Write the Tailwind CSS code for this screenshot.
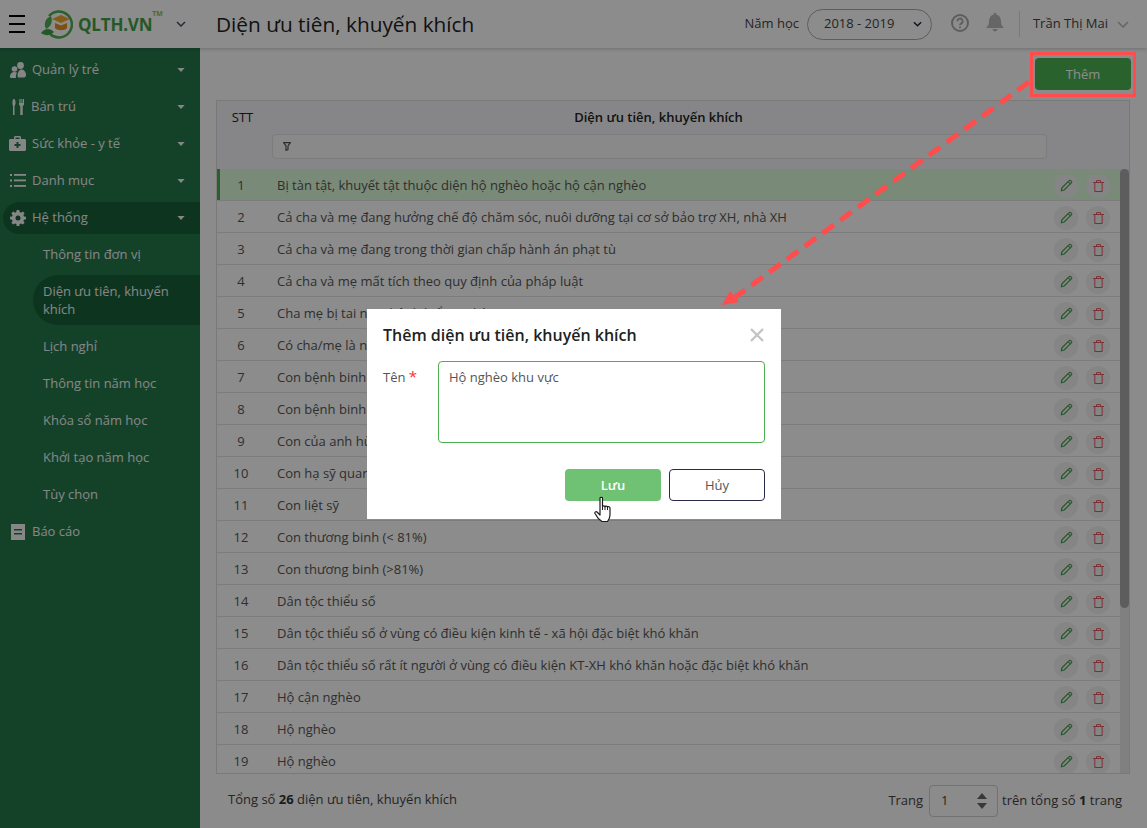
<!DOCTYPE html>
<html lang="vi">
<head>
<meta charset="UTF-8">
<title>Diện ưu tiên, khuyến khích</title>
<script src="https://cdn.jsdelivr.net/npm/@tailwindcss/browser@4"></script>
</head>
<body class="relative w-[1147px] h-[828px] overflow-hidden bg-white font-['Open_Sans',sans-serif] text-[13px] text-[#333]">

<!-- header -->
<header class="relative z-10 flex items-center h-12 bg-white shadow-[0_1px_4px_rgba(0,0,0,0.2)]">
  <div class="flex flex-col gap-[6px] ml-[9px] w-4">
    <span class="h-[2px] bg-black"></span><span class="h-[2px] bg-black"></span><span class="h-[2px] bg-black"></span>
  </div>
  <div class="flex items-center ml-[15px] w-[137px] h-8">
    <svg class="w-[34px] h-[30px] shrink-0" viewBox="0 0 34 30">
      <path d="M9 7 A13 13 0 1 1 10 25" fill="none" stroke="#4caf50" stroke-width="2.4"/>
      <path d="M1 24 C5 19 10 19 14 23 C10 27 5 27 1 24Z" fill="#43a047"/>
      <path d="M6 20 C3 14 6 9 11 7 C13 12 11 18 6 20Z" fill="#4caf50"/>
      <path d="M12 10 L21 6 L30 10 L21 14Z" fill="#f0a830"/>
      <path d="M15 14 L21 16.5 L27 14 V19 C25 22 17 22 15 19Z" fill="#e88f20"/>
    </svg>
    <span class="ml-[4px] text-[17px] leading-none font-bold text-[#43a047] tracking-[-0.2px]">QLTH.VN</span>
    <span class="self-start mt-[2px] text-[7px] leading-none font-bold text-[#8bc34a]">TM</span>
  </div>
  <svg class="w-[10px] h-[6px] -ml-px" viewBox="0 0 10 6"><path d="M1 1l4 4 4-4" fill="none" stroke="#44445a" stroke-width="1.4"/></svg>
  <h1 class="ml-[30px] text-[20.8px] leading-none text-[#222]">Diện ưu tiên, khuyến khích</h1>
  <div class="ml-auto flex items-center">
    <span class="text-[#444]">Năm học</span>
    <div class="flex items-center justify-between ml-2 w-[125px] h-[31px] pl-4 pr-[9px] rounded-full border border-[#aaa] text-[#444]">
      <span>2018 - 2019</span>
      <svg class="w-[9px] h-[6px]" viewBox="0 0 10 6"><path d="M1 1l4 4 4-4" fill="none" stroke="#22223a" stroke-width="1.6"/></svg>
    </div>
    <svg class="w-[18px] h-[18px] ml-[19px] -mt-[3px]" viewBox="0 0 18 18" fill="none" stroke="#aaa"><circle cx="9" cy="9" r="8" stroke-width="2"/><path d="M6.4 7.2a2.6 2.6 0 1 1 3.9 2.2c-.9.5-1.3 1-1.3 1.9" stroke-width="1.8"/><path d="M9 12.6v1.7" stroke-width="1.8"/></svg>
    <svg class="w-[18px] h-[19px] ml-[17px] -mt-[3px]" viewBox="0 0 18 19" fill="#bbb"><path d="M9 0a1.5 1.5 0 0 1 1.5 1.7C13.5 2.4 15 5 15 8c0 3.5 1 5 3 7H0c2-2 3-3.500 3-7 0-3 1.500-5.600 4.500-6.300A1.500 1.500 0 0 1 9 0zM6.500 16h5a2.500 2.500 0 0 1-5 0z"/></svg>
    <span class="ml-[15px] w-px h-[26px] bg-[#ddd]"></span>
    <span class="ml-[13px] text-[#444]">Trần Thị Mai</span>
    <svg class="w-3 h-[7px] ml-[9px] mr-[18px]" viewBox="0 0 12 7"><path d="M1 1l5 5 5-5" fill="none" stroke="#bbb" stroke-width="1.6"/></svg>
  </div>
</header>

<div class="flex h-[780px]">
  <!-- sidebar -->
  <nav class="w-[200px] shrink-0 pt-[3px] bg-[#24784c] text-[#f4f4f4]">
    <a class="flex items-center h-[37px] pl-[10px] pr-[15px]">
      <svg class="w-4 h-4 shrink-0" viewBox="0 0 16 16" fill="#f4f4f4"><circle cx="10.500" cy="3.500" r="3.400"/><circle cx="4.500" cy="7" r="2.800"/><path d="M0 15c0-3.500 2-5 4.500-5 1 0 2 .3 2.600.8C6 12 5.800 14 6 16H1a1 1 0 0 1-1-1z"/><path d="M7.500 14c0-4 2-6.500 4-6.500S16 9.500 16 13c0 1.500-1 2.500-2 2.500H9c-1 0-1.500-.5-1.500-1.500z"/></svg>
      <span class="ml-[6px] flex-1">Quản lý trẻ</span>
      <svg class="w-2 h-1" viewBox="0 0 9 5"><path d="M0 0h9L4.500 5z" fill="#f4f4f4"/></svg>
    </a>
    <a class="flex items-center h-[37px] pl-[12px] pr-[15px]">
      <svg class="w-[12px] h-4 shrink-0" viewBox="0 0 12 16" fill="#f4f4f4"><path d="M1.400 0c.8 0 1.600 1 1.600 3.500 0 2-.5 3-1 3.300V16H.500V6.800C0 6.500 0 5 0 3.500 0 1 .6 0 1.400 0z" transform="translate(.5 0)"/><path d="M7 0h.6v4h.6V0h.6v4h.6V0h.6v4h.6V0H12v5c0 1-.6 1.800-1.300 2V16H8.300V7C7.600 6.800 7 6 7 5z"/></svg>
      <span class="ml-[7px] flex-1">Bán trú</span>
      <svg class="w-2 h-1" viewBox="0 0 9 5"><path d="M0 0h9L4.500 5z" fill="#f4f4f4"/></svg>
    </a>
    <a class="flex items-center h-[37px] pl-[9px] pr-[15px]">
      <svg class="w-[17px] h-[15px] shrink-0" viewBox="0 0 17 15"><path fill="#f4f4f4" fill-rule="evenodd" d="M5 3V1.500C5 .6 5.600 0 6.500 0h4c.9 0 1.500.6 1.500 1.500V3h3.500c.8 0 1.500.7 1.500 1.500v9c0 .8-.7 1.500-1.500 1.500h-14C.7 15 0 14.300 0 13.500v-9C0 3.700.7 3 1.500 3zM6.500 1.500V3h4V1.500zM7.500 6v2h-2v2h2v2h2v-2h2V8h-2V6z"/></svg>
      <span class="ml-[6px] flex-1">Sức khỏe - y tế</span>
      <svg class="w-2 h-1" viewBox="0 0 9 5"><path d="M0 0h9L4.500 5z" fill="#f4f4f4"/></svg>
    </a>
    <a class="flex items-center h-[37px] pl-[10px] pr-[15px]">
      <svg class="w-4 h-[13px] shrink-0" viewBox="0 0 16 13" fill="#f4f4f4"><rect y="0" width="2" height="2"/><rect y="5.500" width="2" height="2"/><rect y="11" width="2" height="2"/><rect x="4" y="0" width="12" height="1.800"/><rect x="4" y="5.500" width="12" height="1.800"/><rect x="4" y="11" width="12" height="1.800"/></svg>
      <span class="ml-[6px] flex-1">Danh mục</span>
      <svg class="w-2 h-1" viewBox="0 0 9 5"><path d="M0 0h9L4.500 5z" fill="#f4f4f4"/></svg>
    </a>
    <div class="flex items-center h-[37px] pl-[3px]">
      <a class="flex items-center w-full h-8 pl-[7px] pr-[15px] rounded-l-full bg-[#16603a]">
        <svg class="w-4 h-4 shrink-0" viewBox="0 0 16 16"><path fill="#f4f4f4" fill-rule="evenodd" d="M6.700 0h2.600l.4 2.100 1.300.6 1.800-1.200 1.800 1.800-1.200 1.800.6 1.300 2 .3v2.600l-2 .4-.6 1.300 1.200 1.800-1.800 1.800-1.800-1.200-1.300.6-.4 2H6.700l-.4-2-1.300-.6-1.800 1.200-1.800-1.800 1.200-1.800-.6-1.300-2-.4V6.700l2-.3.6-1.300-1.200-1.800 1.800-1.800L5 2.700l1.300-.6zM8 5.500a2.500 2.500 0 1 0 0 5 2.500 2.500 0 0 0 0-5z"/></svg>
        <span class="ml-[6px] flex-1">Hệ thống</span>
        <svg class="w-2 h-1" viewBox="0 0 9 5"><path d="M0 0h9L4.500 5z" fill="#f4f4f4"/></svg>
      </a>
    </div>
    <a class="flex items-center h-[37px] pl-[43px]">Thông tin đơn vị</a>
    <div class="py-[2px] pl-[33px] pb-[3px]">
      <a class="flex items-center h-[50px] pl-[10px] pr-5 leading-[18px] rounded-l-[25px] bg-[#16603a]">Diện ưu tiên, khuyến khích</a>
    </div>
    <a class="flex items-center h-[37px] pl-[43px]">Lịch nghỉ</a>
    <a class="flex items-center h-[37px] pl-[43px]">Thông tin năm học</a>
    <a class="flex items-center h-[37px] pl-[43px]">Khóa sổ năm học</a>
    <a class="flex items-center h-[37px] pl-[43px]">Khởi tạo năm học</a>
    <a class="flex items-center h-[37px] pl-[43px]">Tùy chọn</a>
    <a class="flex items-center h-[37px] pl-[11px]">
      <svg class="w-[14px] h-4 shrink-0" viewBox="0 0 14 16"><path fill="#f4f4f4" fill-rule="evenodd" d="M0 0h14v16H0zM3 5v1.600h8V5zM3 9v1.600h8V9z"/></svg>
      <span class="ml-[7px]">Báo cáo</span>
    </a>
  </nav>

  <!-- content -->
  <main class="flex-1 min-w-0 flex flex-col pl-4 pr-[17px] bg-[#fdfdfd]">
    <div class="flex justify-end items-start h-[52px] pt-[10px] -mr-[1px]">
      <button class="w-[96px] h-8 pt-[2px] rounded-[4px] bg-[#4eb254] text-white">Thêm</button>
    </div>
    <div class="flex flex-col h-[674px] border border-[#dcdcdc] overflow-hidden">
      <div class="shrink-0 h-[68px] bg-[#f5f5f7] pr-[8px]">
        <div class="flex h-[34px] items-center font-semibold text-[#222]">
          <span class="w-[53px] -ml-[1px] mr-[2px] text-center font-normal">STT</span>
          <span class="w-[775px] text-center">Diện ưu tiên, khuyến khích</span>
        </div>
        <div class="flex items-center -mt-px ml-[55px] w-[775px] h-[25px] pl-[10px] rounded-[4px] border border-[#e2e2e2] bg-[#fafafa]">
          <svg class="w-2 h-[9px]" viewBox="0 0 8 9" fill="none" stroke="#555" stroke-width="1.200"><path d="M.7.7h6.600L5 4v3.500L3 8.300V4z"/></svg>
        </div>
      </div>
      <div class="relative flex-1 min-h-0 overflow-hidden">
        <div id="rows" class="pr-[8px]"></div>
        <div class="absolute top-0 right-0 bottom-0 w-[9px] bg-[#eaeaea]">
          <div class="h-[439px] rounded-b-full rounded-t-full bg-[#aaa]"></div>
        </div>
      </div>
    </div>
    <div class="flex items-center flex-1 pl-3 text-[#444]">
      <span class="-mt-[2px]">Tổng số <b class="font-bold text-[#333]">26</b> diện ưu tiên, khuyến khích</span>
      <div class="ml-auto flex items-center">
        <span>Trang</span>
        <div class="flex items-center justify-between ml-[6px] w-[69px] h-8 pl-[11px] pr-[10px] rounded-[4px] border border-[#cfcfcf] bg-[#fdfdfd]">
          <span>1</span>
          <svg class="w-[10px] h-[16px]" viewBox="0 0 10 16" fill="#666"><path d="M5 0l5 6H0z"/><path d="M5 16l5-6H0z"/></svg>
        </div>
        <span class="ml-[4px] mr-[8px]">trên tổng số <b class="font-bold text-[#333]">1</b> trang</span>
      </div>
    </div>
  </main>
</div>

<!-- backdrop -->
<div class="absolute inset-0 z-20 bg-black/45"></div>

<!-- annotation drawn on the screenshot -->
<div class="absolute z-30 left-[1030px] top-[52px] w-[106px] h-[45px] border-[3px] border-[#ff4c4c]"></div>
<svg class="absolute z-30 inset-0 w-[1147px] h-[828px] pointer-events-none" viewBox="0 0 1147 828">
  <line x1="1029" y1="82" x2="734" y2="298" stroke="#ff4c4c" stroke-width="5" stroke-dasharray="14 8"/>
  <path d="M722 305L730 291L739 302Z" fill="#ff4c4c"/>
</svg>

<!-- modal -->
<div class="absolute z-40 left-[367px] top-[309px] w-[414px] h-[210px] px-4 bg-white">
  <div class="flex items-center justify-between h-[52px]">
    <h2 class="text-[16px] font-semibold leading-none text-[#222]">Thêm diện ưu tiên, khuyến khích</h2>
    <svg class="w-[14px] h-[14px] mr-[1px]" viewBox="0 0 14 14" stroke="#c4c4c4" stroke-width="2.400"><path d="M1 1l12 12M13 1L1 13"/></svg>
  </div>
  <div class="flex">
    <label class="w-[55px] pt-[7px] text-[#555]">Tên <span class="text-[15px] leading-none text-[#ff2d2d]">*</span></label>
    <div class="w-[327px] h-[82px] px-[10px] py-[6px] rounded-[4px] border border-[#4caf50] text-[#555]">Hộ nghèo khu vực</div>
  </div>
  <div class="flex justify-end gap-2 mt-[26px]">
    <button class="w-[96px] h-8 pt-[2px] rounded-[4px] bg-[#6fc174] text-white font-semibold">Lưu</button>
    <button class="w-[96px] h-8 pt-[2px] rounded-[4px] border border-[#2a2a4a] bg-white text-[#555]">Hủy</button>
  </div>
</div>

<!-- hand cursor -->
<svg class="absolute z-50 left-[594px] top-[496px] w-[20px] h-[27px]" viewBox="0 0 20 27">
  <path d="M6 2c0-1 2.500-1 2.500 0v8.500c.5-1 2.500-1 2.500.3.300-1 2.500-1 2.500.4.400-.8 2.500-.7 2.500.7v7c0 3-1.500 5-2.500 6.600H8C5.500 24 2 19.500 1 17.500c-.6-1.300 1-2.500 2-1.500l3 3z" fill="#fff" stroke="#1b1b1b" stroke-width="1.200" stroke-linejoin="round"/>
  <path d="M8.500 9.500V14M11 10.500V14M13.500 11V14" stroke="#1b1b1b" fill="none"/>
</svg>

<script>
  const items = [
    'Bị tàn tật, khuyết tật thuộc diện hộ nghèo hoặc hộ cận nghèo',
    'Cả cha và mẹ đang hưởng chế độ chăm sóc, nuôi dưỡng tại cơ sở bảo trợ XH, nhà XH',
    'Cả cha và mẹ đang trong thời gian chấp hành án phạt tù',
    'Cả cha và mẹ mất tích theo quy định của pháp luật',
    'Cha mẹ bị tai nạn, bệnh hiểm nghèo',
    'Có cha/mẹ là người dân tộc thiểu số',
    'Con bệnh binh (< 81%)',
    'Con bệnh binh (>81%)',
    'Con của anh hùng lực lượng vũ trang',
    'Con hạ sỹ quan',
    'Con liệt sỹ',
    'Con thương binh (< 81%)',
    'Con thương binh (>81%)',
    'Dân tộc thiểu số',
    'Dân tộc thiểu số ở vùng có điều kiện kinh tế - xã hội đặc biệt khó khăn',
    'Dân tộc thiểu số rất ít người ở vùng có điều kiện KT-XH khó khăn hoặc đặc biệt khó khăn',
    'Hộ cận nghèo',
    'Hộ nghèo',
    'Hộ nghèo'
  ];
  const pencil = '<svg class="w-[13px] h-[13px]" viewBox="0 0 14 14" fill="none" stroke="#43a047" stroke-width="1.300"><path d="M1.500 12.500l.6-3L9.800 1.800a1.300 1.300 0 0 1 1.900 0l.5.5a1.300 1.300 0 0 1 0 1.900L4.500 11.900z"/><path d="M8.800 2.800l2.400 2.400"/></svg>';
  const trash = '<svg class="w-[11px] h-[12px]" viewBox="0 0 11 12" fill="none" stroke="#e2595c" stroke-width="1"><path d="M0 2.500h11M3.500 2.500V.6h4v1.900M1.800 2.500v9h7.400v-9"/></svg>';
  const rows = items.map((text, i) => {
    const rowClass = i === 0 ? 'bg-[#defcda] shadow-[inset_3px_0_0_#4caf50]' : 'bg-white';
    return `<div class="flex items-center h-8 pt-[2px] border-b border-[#e2e2e2] ${rowClass}">
      <span class="w-[48px] text-center text-[#555]">${i + 1}</span>
      <span class="flex-1 pl-[12px] text-[#555]">${text.replace('<', '&lt;')}</span>
      <span class="flex items-center justify-center w-6 h-6 rounded-full bg-[#f2f2f2] mr-2">${pencil}</span>
      <span class="flex items-center justify-center w-6 h-6 rounded-full bg-[#f2f2f2] mr-[11px]">${trash}</span>
    </div>`;
  });
  document.getElementById('rows').innerHTML = rows.join('');
</script>
</body>
</html>
